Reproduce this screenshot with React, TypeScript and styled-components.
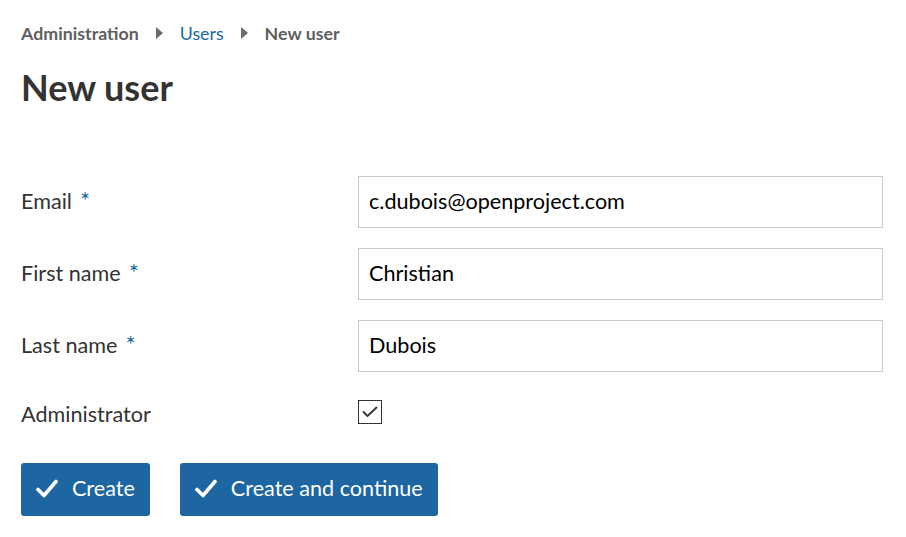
import React from "react";
import styled, { createGlobalStyle } from "styled-components";

const GlobalStyle = createGlobalStyle`
  html, body { margin: 0; padding: 0; background: #fff; }
  body { font-family: Lato, "Noto Sans", sans-serif; color: #333; }
  * { box-sizing: border-box; }
`;

const Page = styled.div`
  padding: 20px 23px 0 21px;
`;

const Breadcrumb = styled.nav`
  display: flex;
  align-items: center;
  gap: 17px;
  font-size: 17.8px;
  font-weight: 700;
  line-height: 26px;
  color: #5f5f5f;
`;

const Crumb = styled.span<{ $link?: boolean }>`
  color: ${(p) => (p.$link ? "#1a67a3" : "#5f5f5f")};
  font-weight: ${(p) => (p.$link ? 400 : 700)};
`;

const Arrow = styled.span`
  width: 0;
  height: 0;
  border-top: 6.5px solid transparent;
  border-bottom: 6.5px solid transparent;
  border-left: 7px solid #6b6b6b;
`;

const Title = styled.h1`
  margin: 20px 0 0;
  font-size: 36px;
  font-weight: 700;
  line-height: 42px;
  color: #333;
`;

const Form = styled.div`
  display: grid;
  grid-template-columns: 337px 1fr;
  row-gap: 20px;
  margin-top: 68px;
  align-items: center;
`;

const Label = styled.label`
  font-size: 21.6px;
  color: #333;
  line-height: 28px;
  margin-top: -3px;
`;

const Required = styled.span`
  color: #1a67a3;
  margin-left: 8px;
  font-size: 24px;
  line-height: 0;
`;

const Input = styled.input`
  height: 52px;
  width: 100%;
  border: 1px solid #cbcbcb;
  border-radius: 0;
  padding: 0 10px 2px;
  font-family: Lato, "Noto Sans", sans-serif;
  font-size: 21.6px;
  color: #000;
  background: #fff;
  outline: none;
`;

const CheckRow = styled.div`
  height: 46px;
  display: flex;
  align-items: center;
`;

const CheckBox = styled.span`
  width: 24px;
  height: 24px;
  border: 1px solid #444;
  outline: 1px dotted #222;
  outline-offset: -1px;
  display: flex;
  align-items: center;
  justify-content: center;
  margin-top: -7px;
`;

const Actions = styled.div`
  display: flex;
  gap: 30px;
  margin-top: 25px;
`;

const Button = styled.button`
  height: 53px;
  display: inline-flex;
  align-items: center;
  gap: 14px;
  padding: 0 15px 3px;
  background: #1d66a2;
  color: #fff;
  border: none;
  border-radius: 3px;
  font-family: Lato, "Noto Sans", sans-serif;
  font-size: 21.6px;
  cursor: pointer;
`;

const Check = () => (
  <svg width="22" height="19" viewBox="0 0 22 19" fill="none">
    <path d="M2 10.5 L8 16.5 L20 2.5" stroke="#fff" strokeWidth="3.6" strokeLinecap="round" strokeLinejoin="round" />
  </svg>
);

const SmallCheck = () => (
  <svg width="16" height="12" viewBox="0 0 16 12" fill="none">
    <path d="M1.5 6 L5.5 10 L14.5 1.5" stroke="#333" strokeWidth="1.8" strokeLinecap="round" strokeLinejoin="round" />
  </svg>
);

export default function App() {
  return (
    <>
      <GlobalStyle />
      <Page>
        <Breadcrumb>
          <Crumb>Administration</Crumb>
          <Arrow />
          <Crumb $link>Users</Crumb>
          <Arrow />
          <Crumb>New user</Crumb>
        </Breadcrumb>
        <Title>New user</Title>
        <Form>
          <Label>
            Email<Required>*</Required>
          </Label>
          <Input defaultValue="c.dubois@openproject.com" />
          <Label>
            First name<Required>*</Required>
          </Label>
          <Input defaultValue="Christian" />
          <Label>
            Last name<Required>*</Required>
          </Label>
          <Input defaultValue="Dubois" />
          <Label>Administrator</Label>
          <CheckRow>
            <CheckBox>
              <SmallCheck />
            </CheckBox>
          </CheckRow>
        </Form>
        <Actions>
          <Button>
            <Check />
            Create
          </Button>
          <Button>
            <Check />
            Create and continue
          </Button>
        </Actions>
      </Page>
    </>
  );
}
